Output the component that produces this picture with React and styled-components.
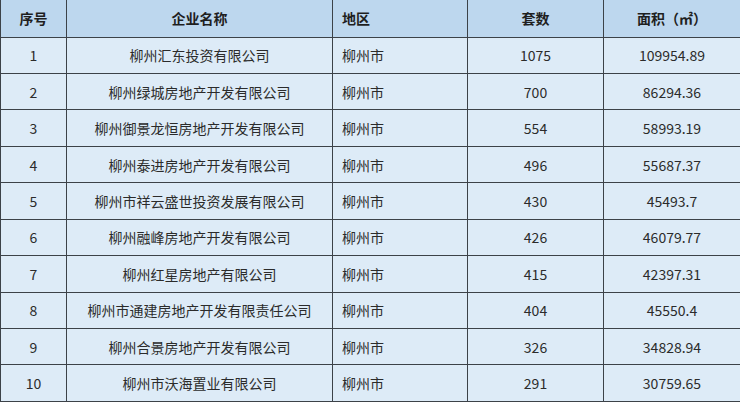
import React from 'react';
import styled, { createGlobalStyle } from 'styled-components';

const GlobalStyle = createGlobalStyle`
  html, body {
    margin: 0;
    padding: 0;
    background: #ffffff;
  }
  body {
    font-family: "Noto Sans CJK SC", "Noto Sans", sans-serif;
  }
`;

const Table = styled.table`
  width: 740px;
  height: 402px;
  border-collapse: collapse;
  table-layout: fixed;
  background-color: #ddebf7;
  color: #2b2b2b;
  font-size: 14px;
`;

const Col = styled.col`
  width: ${props => props.w}px;
`;

const HeadRow = styled.tr`
  height: 37px;
  background-color: #bdd7ee;
`;

const Row = styled.tr`
  height: 36.4px;
`;

const Th = styled.th`
  box-sizing: border-box;
  border: 1px solid #3c4248;
  border-top: none;
  padding: 0 0 0 ${props => (props.left ? '9px' : '0')};
  font-weight: 700;
  font-size: 14px;
  text-align: ${props => (props.left ? 'left' : 'center')};
  color: #1f1f1f;
`;

const Td = styled.td`
  box-sizing: border-box;
  border: 1px solid #3c4248;
  padding: 0 0 0 ${props => (props.left ? '9px' : '0')};
  text-align: ${props => (props.left ? 'left' : 'center')};
  white-space: nowrap;
  line-height: 1;
`;

const rows = [
  ['1', '柳州汇东投资有限公司', '柳州市', '1075', '109954.89'],
  ['2', '柳州绿城房地产开发有限公司', '柳州市', '700', '86294.36'],
  ['3', '柳州御景龙恒房地产开发有限公司', '柳州市', '554', '58993.19'],
  ['4', '柳州泰进房地产开发有限公司', '柳州市', '496', '55687.37'],
  ['5', '柳州市祥云盛世投资发展有限公司', '柳州市', '430', '45493.7'],
  ['6', '柳州融峰房地产开发有限公司', '柳州市', '426', '46079.77'],
  ['7', '柳州红星房地产有限公司', '柳州市', '415', '42397.31'],
  ['8', '柳州市通建房地产开发有限责任公司', '柳州市', '404', '45550.4'],
  ['9', '柳州合景房地产开发有限公司', '柳州市', '326', '34828.94'],
  ['10', '柳州市沃海置业有限公司', '柳州市', '291', '30759.65'],
];

const App = () => {
  return (
    <>
      <GlobalStyle />
      <Table>
        <colgroup>
          <Col w={66} />
          <Col w={266} />
          <Col w={135} />
          <Col w={136} />
          <Col w={137} />
        </colgroup>
        <thead>
          <HeadRow>
            <Th>序号</Th>
            <Th>企业名称</Th>
            <Th left>地区</Th>
            <Th>套数</Th>
            <Th>面积（㎡）</Th>
          </HeadRow>
        </thead>
        <tbody>
          {rows.map(r => (
            <Row key={r[0]}>
              <Td>{r[0]}</Td>
              <Td>{r[1]}</Td>
              <Td left>{r[2]}</Td>
              <Td>{r[3]}</Td>
              <Td>{r[4]}</Td>
            </Row>
          ))}
        </tbody>
      </Table>
    </>
  );
};

export default App;
